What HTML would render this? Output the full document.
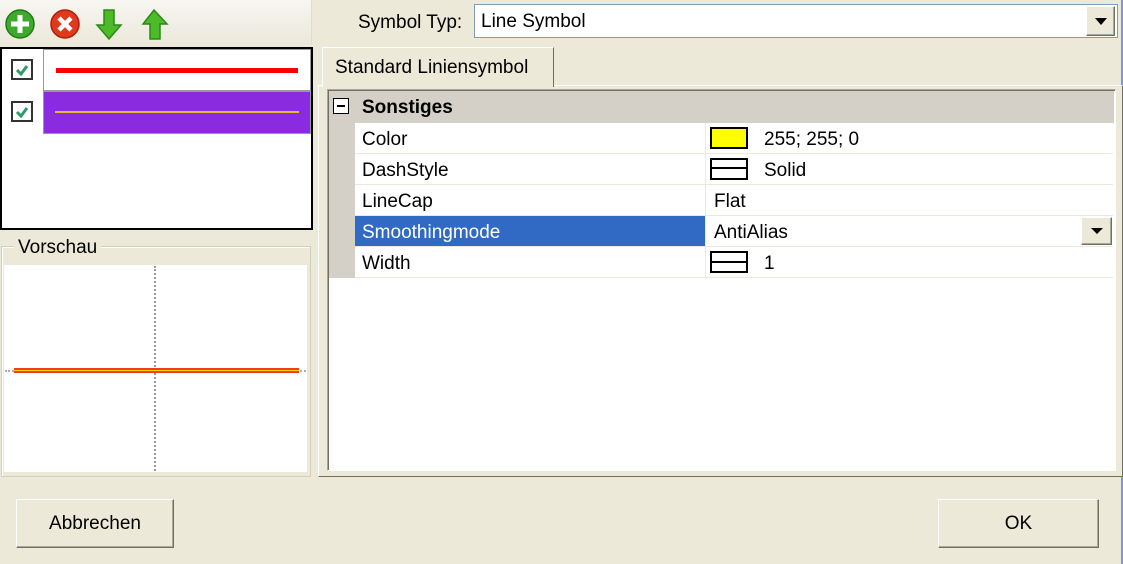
<!DOCTYPE html>
<html><head><meta charset="utf-8"><style>
*{box-sizing:border-box;margin:0;padding:0}
body{width:1123px;height:564px;background:#ECE9D8;font-family:"Liberation Sans",sans-serif;font-size:19px;color:#000;position:relative;overflow:hidden}
.a{position:absolute}
.btn{position:absolute;background:#ECE9D8;border:1px solid;border-color:#fff #716F64 #716F64 #fff;box-shadow:inset -1px -1px 0 #ACA899;text-align:center;font-size:19px}
.row{position:absolute;left:355px;width:758px;height:31px;border-bottom:1px solid #ECE9D8;background:#fff}
.row .n{position:absolute;left:0;top:0;width:351px;height:30px;padding:6px 0 0 7px;border-right:1px solid #ECE9D8}
.row .v{position:absolute;left:352px;top:0;height:30px;padding:6px 0 0 7px}
.sw{position:absolute;left:355px;top:4px;width:38px;height:22px;border:2px solid #000}
.cb{position:absolute;left:11px;width:22px;height:21px;border:2px solid #333;background:#fff}
</style></head><body>
<div class="a" style="right:0;top:0;width:2px;height:564px;background:#7A96DF"></div>
<div class="a" style="left:0;top:0;width:312px;height:45px;background:linear-gradient(#F7F6F1,#EBE8DA);border-right:1px solid #E0DDD0"></div>
<svg class="a" style="left:4px;top:7px" width="170" height="34" viewBox="0 0 170 34">
<circle cx="16" cy="17" r="14" fill="#3DAA2C" stroke="#207A18" stroke-width="1.5"/>
<path d="M16 8v18M7 17h18" stroke="#fff" stroke-width="5"/>
<circle cx="61" cy="17" r="14" fill="#E2381C" stroke="#A8200E" stroke-width="1.5"/>
<path d="M55 11l12 12M67 11l-12 12" stroke="#fff" stroke-width="4.5"/>
<path d="M100 3h10v15h7l-12 14l-12-14h7z" fill="#4DBA2A" stroke="#2A8A14" stroke-width="1.5"/>
<path d="M150 3l13 14h-7v15h-10v-15h-7z" fill="#4DBA2A" stroke="#2A8A14" stroke-width="1.5"/>
</svg>
<div class="a" style="left:0;top:47px;width:313px;height:183px;background:#fff;border:2px solid #000"></div>
<div class="a" style="left:43px;top:49px;width:268px;height:42px;border:1px solid #999;background:#fff"></div>
<div class="a" style="left:56px;top:68px;width:242px;height:5px;background:#F00"></div>
<div class="a" style="left:43px;top:91px;width:268px;height:43px;border:1px solid #999;background:#8A2BE2"></div>
<div class="a" style="left:55px;top:111px;width:244px;height:2px;background:#E8B830"></div>
<div class="cb" style="top:59px"><svg width="18" height="17"><path d="M4 9l4 4l6-8" stroke="#2E9A6A" stroke-width="3" fill="none"/></svg></div>
<div class="cb" style="top:101px"><svg width="18" height="17"><path d="M4 9l4 4l6-8" stroke="#2E9A6A" stroke-width="3" fill="none"/></svg></div>
<div class="a" style="left:1px;top:246px;width:310px;height:231px;border:1px solid #D0D0BF;box-shadow:inset 1px 1px 0 #fff"></div>
<div class="a" style="left:14px;top:237px;padding:0 4px;background:#ECE9D8">Vorschau</div>
<div class="a" style="left:4px;top:265px;width:303px;height:207px;background:#fff"></div>
<div class="a" style="left:154px;top:266px;width:0;height:205px;border-left:2px dotted #999"></div>
<div class="a" style="left:5px;top:370px;width:301px;height:0;border-top:2px dotted #aaa"></div>
<div class="a" style="left:14px;top:368px;width:285px;height:5px;background:#F23C1E"></div>
<div class="a" style="left:14px;top:370px;width:285px;height:1px;background:#FFD800"></div>
<div class="a" style="left:358px;top:12px">Symbol Typ:</div>
<div class="a" style="left:474px;top:4px;width:644px;height:34px;background:#fff;border:1px solid #7F9DB9;padding:6px 0 0 6px">Line Symbol</div>
<div class="btn" style="left:1086px;top:6px;width:29px;height:30px"></div>
<div class="a" style="left:1095px;top:18px;width:0;height:0;border:6px solid transparent;border-top:7px solid #000;border-bottom:0"></div>
<div class="a" style="left:318px;top:85px;width:805px;height:392px;border:1px solid;border-color:#fff #716F64 #716F64 #fff;background:#ECE9D8"></div>
<div class="a" style="left:322px;top:47px;width:232px;height:40px;background:#ECE9D8;border:1px solid;border-color:#fff #716F64 transparent #fff;border-bottom:none;padding:9px 0 0 12px">Standard Liniensymbol</div>
<div class="a" style="left:327px;top:89px;width:789px;height:382px;background:#fff;border:1px solid;border-color:#ACA899 #fff #fff #ACA899;box-shadow:inset 1px 1px 0 #716F64"></div>
<div class="a" style="left:329px;top:91px;width:785px;height:32px;background:#D4D0C8"></div>
<div class="a" style="left:329px;top:123px;width:26px;height:155px;background:#D4D0C8"></div>
<div class="a" style="left:333px;top:98px;width:16px;height:16px;border:1px solid #000;background:#fff"></div>
<div class="a" style="left:337px;top:105px;width:8px;height:2px;background:#000"></div>
<div class="a" style="left:362px;top:97px;font-weight:bold">Sonstiges</div>
<div class="row" style="top:123px"><div class="n">Color</div><div class="v" style="padding-left:57px">255; 255; 0</div><div class="sw" style="background:#FFFF00"></div></div>
<div class="row" style="top:154px"><div class="n">DashStyle</div><div class="v" style="padding-left:57px">Solid</div><div class="sw" style="background:#fff"><div style="margin-top:7px;border-top:2px solid #000"></div></div></div>
<div class="row" style="top:185px"><div class="n">LineCap</div><div class="v">Flat</div></div>
<div class="row" style="top:216px"><div class="n" style="background:#316AC5;color:#fff">Smoothingmode</div><div class="v">AntiAlias</div></div>
<div class="btn" style="left:1081px;top:217px;width:31px;height:28px"></div>
<div class="a" style="left:1091px;top:228px;width:0;height:0;border:6px solid transparent;border-top:6px solid #000;border-bottom:0"></div>
<div class="row" style="top:247px"><div class="n">Width</div><div class="v" style="padding-left:57px">1</div><div class="sw" style="background:#fff"><div style="margin-top:8px;border-top:2px solid #000"></div></div></div>
<div class="btn" style="left:16px;top:499px;width:158px;height:49px;line-height:47px">Abbrechen</div>
<div class="btn" style="left:938px;top:499px;width:161px;height:49px;line-height:47px">OK</div>
</body></html>
